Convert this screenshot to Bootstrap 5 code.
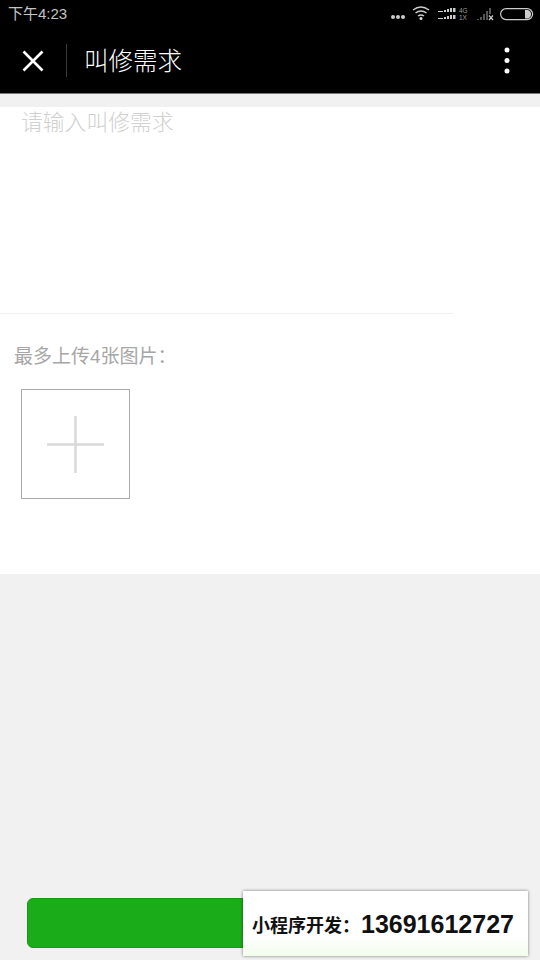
<!DOCTYPE html>
<html lang="zh">
<head>
<meta charset="utf-8">
<title>叫修需求</title>
<link href="https://cdn.jsdelivr.net/npm/bootstrap@5.3.0/dist/css/bootstrap.min.css" rel="stylesheet">
<style>
html,body{height:960px;overflow:hidden}
body{background:#f1f1f1;font-family:"Liberation Sans","Noto Sans CJK SC",sans-serif;position:relative}
.app-shell{height:960px}
.top-bar{background:#000;height:94px;border-bottom:1px solid #777}
.status-row{height:28px;padding:0 6px 0 8px;color:#c4c4c4;font-size:15px;line-height:28px}
.title-row{height:65px;padding:0 30px 0 21px}
.title-sep{width:1px;height:33px;background:#3a3a3a;margin:0 17px 0 21px}
.title-text{color:#fff;font-size:24.5px;line-height:1;font-family:"Noto Sans CJK SC",sans-serif;font-weight:300}
.form-panel{margin-top:13px;background:#fff;height:467px}
.need-box{height:207px;width:453px;border-bottom:1px solid #f1f1f1;padding:1px 0 0 21px;color:#d0d0d0;font-size:21.8px;line-height:26px;font-family:"Noto Sans CJK SC",sans-serif;font-weight:300}
.upload-hint{margin:31px 0 0 14px;color:#a6a6a6;font-size:19px;line-height:24px}
.upload-tile{width:109px;height:110px;margin:20px 0 0 21px;border:1px solid #aaa}
.submit-wrap{padding:0 27px 12px 27px}
.submit-bar{height:50px;background:#1aad19;border:1px solid #179b16;border-radius:6px}
.promo-card{position:absolute;left:243px;top:891px;width:285px;height:65px;background:linear-gradient(#fff 70%,#f2fdec);box-shadow:0 0 3px rgba(0,0,0,.5);padding:2px 0 0 9px;color:#111}
.promo-label{font-size:18px;font-weight:700;font-family:"Noto Sans CJK SC",sans-serif}
.promo-phone{font-size:25px;font-weight:700;margin-left:1px}
</style>
</head>
<body>
<div class="app-shell d-flex flex-column">
  <header class="top-bar">
    <div class="status-row d-flex justify-content-between align-items-center">
      <span>下午4:23</span>
      <svg width="150" height="20" viewBox="0 0 150 20">
        <g fill="#ccc"><circle cx="9" cy="13" r="2"/><circle cx="14" cy="13" r="2"/><circle cx="19" cy="13" r="2"/></g>
        <g fill="none" stroke="#ccc" stroke-width="1.500"><path d="M29 6q8-6 16 0"/><path d="M31.500 9q5.500-4 11 0"/><path d="M34 12q3-2 6 0"/></g>
        <circle cx="37" cy="14.500" r="1.500" fill="#ddd"/>
        <g fill="#ccc"><path d="M54 7h5v1h-5zM60 6h2v2h-2zM63 5h2v3h-2zM66 4h2v4h-2zM69 4h2.500v4h-2.500z"/><path d="M54 14h5v1h-5zM60 13h2v2h-2zM63 12h2v3h-2zM66 11h2v4h-2zM69 11h2.500v4h-2.500z"/></g>
        <text x="75" y="8.500" font-size="6.500" fill="#999" font-family="Liberation Sans">4G</text>
        <text x="75" y="16" font-size="6.500" fill="#999" font-family="Liberation Sans">1X</text>
        <path d="M93 15h2v1h-2zM96 13h2v3h-2zM99 10h2v6h-2zM102 7h2v9h-2zM105 4h2v6h-2z" fill="#555"/>
        <path d="M105 11.500l4 4.500m0-4.500l-4 4.500" stroke="#ccc" stroke-width="1.200"/>
        <rect x="116.600" y="4.600" width="32" height="11" rx="5.500" fill="none" stroke="#ccc" stroke-width="1.200"/>
        <path d="M141 6h3a4.500 4.500 0 0 1 0 8.500h-3z" fill="#ccc"/>
      </svg>
    </div>
    <div class="title-row d-flex align-items-center">
      <svg width="24" height="24" viewBox="0 0 24 24"><path d="M2.500 2.500l19 19m0-19l-19 19" stroke="#fff" stroke-width="2.600"/></svg>
      <span class="title-sep"></span>
      <span class="title-text">叫修需求</span>
      <svg class="ms-auto" width="6" height="28" viewBox="0 0 6 28"><g fill="#fff"><circle cx="3" cy="3" r="2.500"/><circle cx="3" cy="13.500" r="2.500"/><circle cx="3" cy="24" r="2.500"/></g></svg>
    </div>
  </header>
  <main class="form-panel">
    <div class="need-box">请输入叫修需求</div>
    <div class="upload-hint">最多上传4张图片：</div>
    <div class="upload-tile d-flex align-items-center justify-content-center">
      <svg width="57" height="57" viewBox="0 0 57 57"><path d="M0 28.500h57M28.500 0v57" stroke="#d9d9d9" stroke-width="2.500"/></svg>
    </div>
  </main>
  <div class="submit-wrap mt-auto"><div class="submit-bar"></div></div>
</div>
<aside class="promo-card d-flex align-items-center">
  <span class="promo-label">小程序开发：</span><span class="promo-phone">13691612727</span>
</aside>
<script src="https://cdn.jsdelivr.net/npm/bootstrap@5.3.0/dist/js/bootstrap.bundle.min.js"></script>
</body>
</html>
